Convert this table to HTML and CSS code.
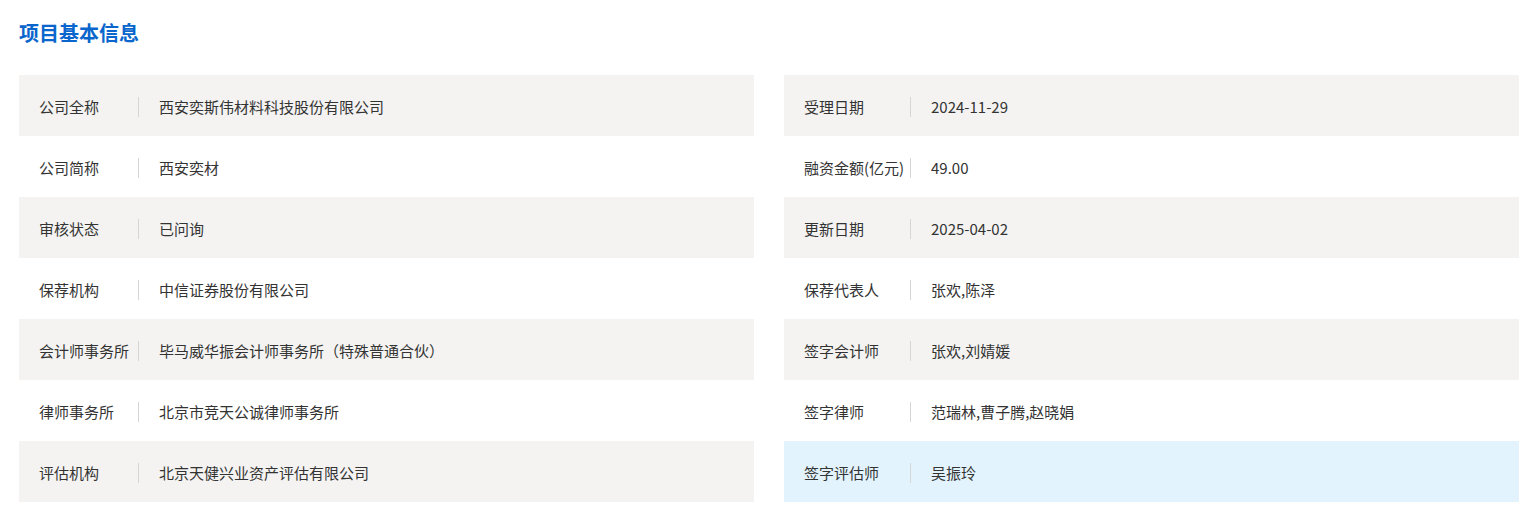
FILE: index.html
```html
<!DOCTYPE html>
<html lang="zh-CN">
<head>
<meta charset="utf-8">
<title>项目基本信息</title>
<link rel="stylesheet" href="styles.css">
</head>
<body>
<section class="panel">
  <h2 class="panel-title">项目基本信息</h2>
  <div class="info-grid">
    <div class="item shaded"><span class="label">公司全称</span><span class="sep"></span><span class="value">西安奕斯伟材料科技股份有限公司</span></div>
    <div class="item shaded right"><span class="label">受理日期</span><span class="sep"></span><span class="value">2024-11-29</span></div>

    <div class="item"><span class="label">公司简称</span><span class="sep"></span><span class="value">西安奕材</span></div>
    <div class="item right"><span class="label">融资金额(亿元)</span><span class="sep"></span><span class="value">49.00</span></div>

    <div class="item shaded"><span class="label">审核状态</span><span class="sep"></span><span class="value">已问询</span></div>
    <div class="item shaded right"><span class="label">更新日期</span><span class="sep"></span><span class="value">2025-04-02</span></div>

    <div class="item"><span class="label">保荐机构</span><span class="sep"></span><span class="value">中信证券股份有限公司</span></div>
    <div class="item right"><span class="label">保荐代表人</span><span class="sep"></span><span class="value">张欢,陈泽</span></div>

    <div class="item shaded"><span class="label">会计师事务所</span><span class="sep"></span><span class="value">毕马威华振会计师事务所（特殊普通合伙）</span></div>
    <div class="item shaded right"><span class="label">签字会计师</span><span class="sep"></span><span class="value">张欢,刘婧媛</span></div>

    <div class="item"><span class="label">律师事务所</span><span class="sep"></span><span class="value">北京市竞天公诚律师事务所</span></div>
    <div class="item right"><span class="label">签字律师</span><span class="sep"></span><span class="value">范瑞林,曹子腾,赵晓娟</span></div>

    <div class="item shaded"><span class="label">评估机构</span><span class="sep"></span><span class="value">北京天健兴业资产评估有限公司</span></div>
    <div class="item highlighted right"><span class="label">签字评估师</span><span class="sep"></span><span class="value">吴振玲</span></div>
  </div>
</section>
</body>
</html>
```

FILE: styles.css
```css
html, body {
  margin: 0;
  padding: 0;
  background: #ffffff;
}

body {
  font-family: "Noto Sans CJK SC", "Microsoft YaHei", "Noto Sans", sans-serif;
  color: #333333;
}

.panel {
  padding: 19px 18px 0 19px;
}

.panel-title {
  margin: 0;
  font-size: 20px;
  line-height: 28px;
  font-weight: 700;
  color: #0a66cc;
}

.info-grid {
  margin-top: 28px;
  display: grid;
  grid-template-columns: 1fr 1fr;
  column-gap: 30px;
}

.item {
  box-sizing: border-box;
  display: flex;
  align-items: center;
  height: 61px;
  padding-top: 2px;
  font-size: 15px;
  line-height: 20px;
}

.item.shaded {
  background: #f4f3f2;
}

.item.highlighted {
  background: #e3f3fd;
}

.label {
  box-sizing: border-box;
  width: 119px;
  padding-left: 20px;
  white-space: nowrap;
}

.item.right .label {
  width: 126px;
}

.sep {
  width: 1px;
  height: 20px;
  background: #d6d6d6;
  flex: none;
}

.value {
  padding-left: 20px;
  white-space: nowrap;
}
```
